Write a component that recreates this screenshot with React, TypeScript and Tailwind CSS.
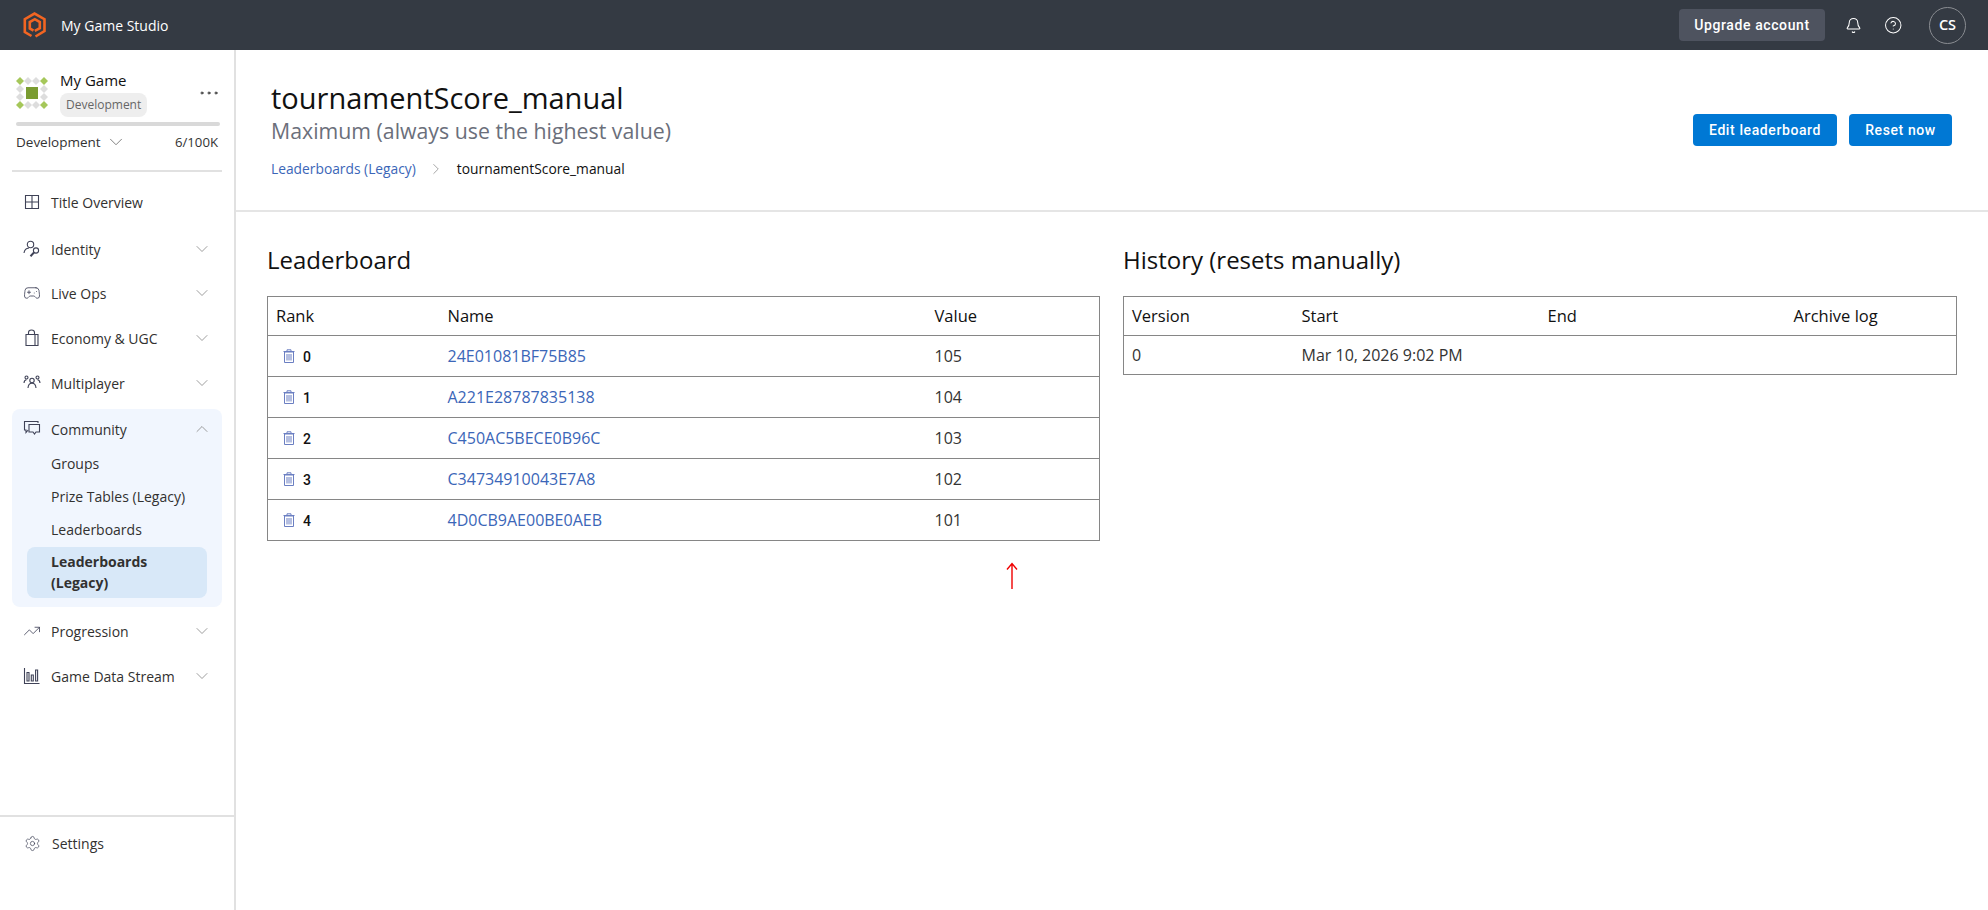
import { Bell, ChevronDown, ChevronRight, ChevronUp, CircleHelp, Ellipsis, Gamepad2, Settings, TrendingUp } from 'lucide-react';
import type { ReactNode } from 'react';

const font = "font-['Open_Sans',sans-serif]";
const din = "font-['Roboto',sans-serif]";

function LogoIcon() {
  return (
    <svg width="24" height="26" viewBox="0 0 24 26" fill="none" stroke="#f26522" strokeWidth="2.6" strokeLinejoin="miter">
      <path d="M8.500 24 1.800 20V7.200L11.500 1.600l10 5.600v11.800L12.500 24.500" />
      <path d="M10.500 18.600 6.800 16.500V10l5-2.800 5 2.800v6.200l-5 2.600" />
    </svg>
  );
}

function GameIcon() {
  const dots = [
    [5, 5, 1], [13, 5, 0], [21, 5, 0], [29, 5, 1],
    [5, 13, 0], [29, 13, 0],
    [5, 21, 0], [29, 21, 0],
    [5, 29, 1], [13, 29, 0], [21, 29, 0], [29, 29, 1],
  ];
  return (
    <svg width="34" height="34" viewBox="0 0 34 34">
      {dots.map(([x, y, on]) => (
        <path key={`${x}-${y}`} d={`M${x} ${y - 4}l4 4-4 4-4-4z`} fill={on ? '#a5c75a' : '#dddddd'} />
      ))}
      <rect x="11" y="11" width="12" height="12" fill="#7a9c31" />
    </svg>
  );
}

const iconProps = {
  width: 18,
  height: 18,
  viewBox: '0 0 18 18',
  fill: 'none',
  stroke: '#3f4257',
  strokeWidth: 1.1,
};

function GridIcon() {
  return (
    <svg {...iconProps}>
      <path d="M2.500 2.500h13v13h-13zM9 2.500v13M2.500 9h13" />
    </svg>
  );
}

function IdentityIcon() {
  return (
    <svg {...iconProps}>
      <circle cx="7.500" cy="4.500" r="3.200" />
      <path d="M1 13c.4-3 2.400-4.800 5-5" />
      <circle cx="13" cy="10.500" r="2.600" />
      <path d="M11 12.500l-3.500 3.700" strokeWidth="2" />
    </svg>
  );
}

function BagIcon() {
  return (
    <svg {...iconProps}>
      <path d="M3 5.500h12v11H3zM12 5.500v11M5.500 5.500V3.500C5.500 2 7 1 8.500 1s3 1 3 2.500v2" />
    </svg>
  );
}

function PeopleIcon() {
  return (
    <svg {...iconProps}>
      <circle cx="9" cy="6.500" r="2.200" />
      <path d="M5 14c.2-3 1.800-4.800 4-4.800s3.800 1.800 4 4.800" />
      <circle cx="3.500" cy="3.500" r="1.500" />
      <circle cx="14.500" cy="3.500" r="1.500" />
      <path d="M1 9c.2-2 1-3.200 2.500-3.200M17 9c-.2-2-1-3.200-2.500-3.200" />
    </svg>
  );
}

function ChatIcon() {
  return (
    <svg {...iconProps}>
      <path d="M15 3V1.500H1.500V10H3v2.500L5.200 10" />
      <path d="M6 4.500h10.500V12H13l-1.500 2L10 12H6z" />
    </svg>
  );
}

function ChartIcon() {
  return (
    <svg {...iconProps}>
      <path d="M1.500 1v15.500h15M4 5.500h2V14H4zM8.300 8h2v6h-2zM12.600 3h2v11h-2z" />
    </svg>
  );
}

function TrashIcon() {
  return (
    <svg width="12" height="14" viewBox="0 0 12 14" fill="none" stroke="#6b7fc2" strokeWidth="1">
      <path d="M1.500 3h9v10.500h-9zM.5 2.500h11M4 2.500V.8h4v1.700" />
      <path d="M4 5v6.500M6 5v6.500M8 5v6.500" />
    </svg>
  );
}

function NavItem({ icon, label, open, className }: { icon: ReactNode; label: string; open?: boolean; className?: string }) {
  return (
    <div className={`flex items-center h-[24px] pl-[11px] pr-[10px] ${className ?? ''}`}>
      <span className="w-[28px] shrink-0 flex">{icon}</span>
      <span className="flex-1 text-[14px] text-[#323130]">{label}</span>
      {open === undefined ? null : open ? (
        <ChevronUp size={20} strokeWidth={1} className="text-[#8a8a8a]" />
      ) : (
        <ChevronDown size={20} strokeWidth={1} className="text-[#8a8a8a]" />
      )}
    </div>
  );
}

function Sidebar() {
  return (
    <aside className="w-[236px] shrink-0 border-r-2 border-[#e1e1e1] flex flex-col">
      <div className="px-[16px] pt-[20px]">
        <div className="flex gap-[11px]">
          <div className="ml-[-1px] pt-[6px]">
            <GameIcon />
          </div>
          <div className="flex-1">
            <div className="text-[15px] leading-[20px] font-medium text-[#111]">My Game</div>
            <div className="mt-[3px] inline-block rounded-lg bg-[#eeeeee] px-[6px] text-[12px] leading-[24px] text-[#666]">Development</div>
          </div>
          <Ellipsis size={24} strokeWidth={1} className="mt-[11px] mr-[-3px] text-[#333]" />
        </div>
        <div className="mt-[5px] h-[4px] w-[204px] rounded bg-[#d9d9d9]" />
        <div className="mt-[5px] flex items-center text-[13.5px] leading-[20px] text-[#333]">
          <span>Development</span>
          <ChevronDown size={22} strokeWidth={1} className="ml-[4px] text-[#777]" />
          <span className="ml-auto text-[13.2px]">6/100K</span>
        </div>
      </div>
      <div className="mx-[12px] mt-[17px] border-t-2 border-[#e1e1e1]" />
      <nav className="mx-[12px] mt-[18px] flex flex-1 flex-col">
        <NavItem icon={<GridIcon />} label="Title Overview" />
        <NavItem icon={<IdentityIcon />} label="Identity" open={false} className="mt-[23px]" />
        <NavItem icon={<Gamepad2 size={18} strokeWidth={1.1} className="text-[#3f4257]" />} label="Live Ops" open={false} className="mt-[20px]" />
        <NavItem icon={<BagIcon />} label="Economy & UGC" open={false} className="mt-[21px]" />
        <NavItem icon={<PeopleIcon />} label="Multiplayer" open={false} className="mt-[21px]" />
        <div className="mt-[14px] h-[198px] rounded-lg bg-[#f1f6fe] pt-[8px]">
          <NavItem icon={<ChatIcon />} label="Community" open />
          <div className="mt-[11px] flex flex-col pl-[39px] text-[14px] text-[#323130]">
            <span className="leading-[24px]">Groups</span>
            <span className="mt-[9px] leading-[24px]">Prize Tables (Legacy)</span>
            <span className="mt-[9px] leading-[24px]">Leaderboards</span>
          </div>
          <div className="ml-[15px] mr-[15px] mt-[5px] rounded-lg bg-[#d8e8f8] py-[5px] pl-[24px] text-[14px] leading-[20.500px] font-bold text-[#323130]">
            Leaderboards (Legacy)
          </div>
        </div>
        <NavItem icon={<TrendingUp size={18} strokeWidth={1.1} className="text-[#3f4257]" />} label="Progression" open={false} className="mt-[12px]" />
        <NavItem icon={<ChartIcon />} label="Game Data Stream" open={false} className="mt-[21px]" />
      </nav>
      <div className="border-t-2 border-[#e1e1e1] h-[95px] pl-[24px] pt-[15px]">
        <div className="flex items-center h-[22px]">
          <Settings size={17} strokeWidth={1} className="text-[#3f4257]" />
          <span className="ml-[11px] text-[14px] text-[#323130]">Settings</span>
        </div>
      </div>
    </aside>
  );
}

function Table({ headers, widths, children }: { headers: string[]; widths: string[]; children: ReactNode }) {
  return (
    <table className="mt-[20px] w-full table-fixed border-collapse border border-[#868686]">
      <colgroup>
        {widths.map((w, i) => (
          <col key={i} className={w} />
        ))}
      </colgroup>
      <thead>
        <tr className="h-[39px] border-b border-[#868686]">
          {headers.map((h) => (
            <th key={h} className="pl-[8px] pr-[8px] text-left text-[16.500px] font-medium text-[#111]">
              {h}
            </th>
          ))}
        </tr>
      </thead>
      <tbody>{children}</tbody>
    </table>
  );
}

const rows = [
  ['0', '24E01081BF75B85', '105'],
  ['1', 'A221E28787835138', '104'],
  ['2', 'C450AC5BECE0B96C', '103'],
  ['3', 'C34734910043E7A8', '102'],
  ['4', '4D0CB9AE00BE0AEB', '101'],
];

export default function App() {
  return (
    <div className={`h-screen flex flex-col bg-white overflow-hidden ${font}`}>
      <header className="h-[50px] shrink-0 bg-[#343a43] flex items-center text-white">
        <div className="ml-[23px]">
          <LogoIcon />
        </div>
        <span className="ml-[14px] text-[14px]">My Game Studio</span>
        <button className={`ml-auto h-[32px] w-[146px] rounded bg-[#4e535f] text-[14px] font-medium tracking-[0.6px] ${din}`}>Upgrade account</button>
        <Bell size={17} strokeWidth={1.5} className="ml-[19.500px]" />
        <CircleHelp size={18.500} strokeWidth={1.3} className="ml-[22.500px]" />
        <div className="ml-[26.500px] mr-[22px] flex h-[37px] w-[37px] items-center justify-center rounded-full border border-[#8a8d92] text-[14.500px] font-semibold">CS</div>
      </header>
      <div className="flex flex-1 min-h-0">
        <Sidebar />
        <main className="flex-1 min-w-0">
          <div className="h-[162px] border-b-2 border-[#e5e5e5] px-[35px] pt-[29px] flex justify-between">
            <div>
              <h1 className="text-[29px] leading-[38px] text-[#111]">tournamentScore_manual</h1>
              <div className="text-[21.300px] leading-[27px] text-[#6b6f7b]">Maximum (always use the highest value)</div>
              <div className="mt-[15px] flex items-center text-[13.800px] leading-[20px]">
                <span className="text-[#3b66b8]">Leaderboards (Legacy)</span>
                <ChevronRight size={18} strokeWidth={1} className="ml-[11px] mr-[12px] text-[#888]" />
                <span className="text-[#111]">tournamentScore_manual</span>
              </div>
            </div>
            <div className={`mt-[35px] mr-[1px] flex gap-[12px] ${din}`}>
              <button className="h-[32px] w-[144px] rounded bg-[#0078d4] text-[14px] font-medium tracking-[0.6px] text-white">Edit leaderboard</button>
              <button className="h-[32px] w-[103px] rounded bg-[#0078d4] text-[14px] font-medium tracking-[0.6px] text-white">Reset now</button>
            </div>
          </div>
          <div className="grid grid-cols-[832px_833px] gap-[24px] pl-[31px] pt-[32px]">
            <section className="relative">
              <h2 className="text-[24px] leading-[32px] text-[#111]">Leaderboard</h2>
              <Table headers={['Rank', 'Name', 'Value']} widths={['w-[172px]', 'w-[487px]', 'w-[173px]']}>
                {rows.map(([rank, name, value]) => (
                  <tr key={rank} className="h-[41px] border-b border-[#868686]">
                    <td className="pl-[15px]">
                      <span className="flex items-center gap-[8px]">
                        <TrashIcon />
                        <span className={`text-[14px] font-medium text-[#111] ${din} translate-y-[1px]`}>{rank}</span>
                      </span>
                    </td>
                    <td className="px-[8px] text-[16px] text-[#3b66b8]">{name}</td>
                    <td className="px-[8px] text-[16px] text-[#333]">{value}</td>
                  </tr>
                ))}
              </Table>
              <svg className="absolute left-[738px] top-[318px]" width="14" height="28" viewBox="0 0 14 28" fill="none" stroke="#f00000" strokeWidth="1.400">
                <path d="M7 27V1.500M2 7.500l5-6 5 6" />
              </svg>
            </section>
            <section>
              <h2 className="text-[24px] leading-[32px] text-[#111]">History (resets manually)</h2>
              <Table headers={['Version', 'Start', 'End', 'Archive log']} widths={['w-[170px]', 'w-[246px]', 'w-[246px]', 'w-[171px]']}>
                <tr className="h-[39px]">
                  <td className="px-[8px] text-[16px] text-[#333]">0</td>
                  <td className="px-[8px] text-[16px] text-[#333]">Mar 10, 2026 9:02 PM</td>
                  <td />
                  <td />
                </tr>
              </Table>
            </section>
          </div>
        </main>
      </div>
    </div>
  );
}
